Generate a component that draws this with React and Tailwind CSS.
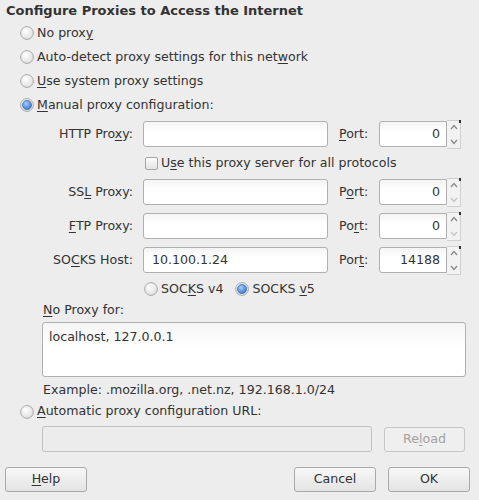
import { useState } from 'react';

function Radio({ checked }) {
  return (
    <svg width="14" height="14" viewBox="0 0 14 14" className="shrink-0">
      <defs>
        <radialGradient id="rOff" cx="0.4" cy="0.35" r="0.7">
          <stop offset="0" stopColor="#ffffff" />
          <stop offset="1" stopColor="#dcdcdc" />
        </radialGradient>
        <radialGradient id="rOn" cx="0.4" cy="0.35" r="0.7">
          <stop offset="0" stopColor="#a9cdf5" />
          <stop offset="1" stopColor="#2f74d0" />
        </radialGradient>
      </defs>
      <circle cx="7" cy="7" r="6.4" fill="url(#rOff)" stroke="#a3a3a3" strokeWidth="0.9" />
      {checked && <circle cx="7" cy="7" r="4.6" fill="url(#rOn)" stroke="#3a6cb0" strokeWidth="0.7" />}
    </svg>
  );
}

function Check() {
  return (
    <span className="block h-[13px] w-[13px] shrink-0 rounded-[2px] border border-[#a6a6a6] bg-gradient-to-b from-[#fdfdfd] to-[#e2e2e2]" />
  );
}

function Field({ value = '', className = '' }) {
  return (
    <div className={`flex h-[26px] items-center rounded-[3px] border border-[#b0b0b0] bg-gradient-to-b from-[#f4f4f4] to-white to-40% px-[8px] ${className}`}>
      {value}
    </div>
  );
}

function Spin({ value, disabledDown }) {
  return (
    <div className="flex h-[29px] items-center">
      <div className="flex h-[26px] w-[68px] items-center justify-end rounded-l-[3px] border border-[#b0b0b0] bg-gradient-to-b from-[#f4f4f4] to-white to-40% pr-[6px]">
        {value}
      </div>
      <div className="relative flex h-[29px] w-[14px] flex-col items-center justify-between border border-l-0 border-[#d0d0d0] bg-[#f2f2f2] py-[3px]">
        <span className="absolute right-[-1px] top-[-1px] h-[3px] w-[2px] bg-[#333]" />
        <svg width="8" height="6" viewBox="0 0 8 6">
          <path d="M1 5 L4 1.5 L7 5" fill="none" stroke="#8a8a8a" strokeWidth="1.3" />
        </svg>
        <svg width="8" height="6" viewBox="0 0 8 6">
          <path d="M1 1 L4 4.5 L7 1" fill="none" stroke={disabledDown ? '#c4c4c4' : '#8a8a8a'} strokeWidth="1.3" />
        </svg>
      </div>
    </div>
  );
}

function ProxyRow({ label, portLabel, host, port, disabledDown }) {
  return (
    <div className="flex h-[34px] items-center">
      <div className="w-[133px] whitespace-nowrap text-right">{label}</div>
      <Field value={host} className="ml-[10px] w-[185px]" />
      <div className="ml-[11px] w-[40px]">{portLabel}</div>
      <Spin value={port} disabledDown={disabledDown} />
    </div>
  );
}

function Btn({ children, className = '' }) {
  return (
    <button type="button" className={`flex h-[25px] w-[82px] items-center justify-center rounded-[3px] border border-[#a9a9a9] bg-gradient-to-b from-[#f7f7f7] to-[#e4e4e4] ${className}`}>
      {children}
    </button>
  );
}

export default function App() {
  const [mode] = useState('manual');

  const radios = [
    { id: 'none', label: <>No prox<u>y</u></> },
    { id: 'auto', label: <>Auto-detect proxy settings for this net<u>w</u>ork</> },
    { id: 'system', label: <><u>U</u>se system proxy settings</> },
    { id: 'manual', label: <><u>M</u>anual proxy configuration:</> },
  ];

  return (
    <div className="h-[500px] w-[479px] overflow-hidden bg-[#ededed] text-[12.6px] text-[#333] [font-family:'DejaVu_Sans',sans-serif] [&_u]:underline-offset-[1.5px]">
      <div className="flex h-[21px] items-center pl-[6px] pt-[1px] text-[13px] font-bold">
        Configure Proxies to Access the Internet
      </div>

      {radios.map((r) => (
        <div key={r.id} className="flex h-[24px] items-center gap-[3px] pl-[20px]">
          <Radio checked={mode === r.id} />
          <span>{r.label}</span>
        </div>
      ))}

      <ProxyRow label={<>HTTP Pro<u>x</u>y:</>} portLabel={<><u>P</u>ort:</>} port="0" />

      <div className="flex h-[24px] items-center gap-[3px] pl-[145px]">
        <Check />
        <span>U<u>s</u>e this proxy server for all protocols</span>
      </div>

      <ProxyRow label={<>SS<u>L</u> Proxy:</>} portLabel={<>P<u>o</u>rt:</>} port="0" disabledDown />
      <ProxyRow label={<><u>F</u>TP Proxy:</>} portLabel={<>Po<u>r</u>t:</>} port="0" disabledDown />
      <ProxyRow label={<>SO<u>C</u>KS Host:</>} host="10.100.1.24" portLabel={<>Por<u>t</u>:</>} port="14188" />

      <div className="flex h-[24px] items-center pl-[144px]">
        <Radio />
        <span className="ml-[3px]">SOC<u>K</u>S v4</span>
        <span className="ml-[12px]"><Radio checked /></span>
        <span className="ml-[3px]">SOCKS <u>v</u>5</span>
      </div>

      <div className="flex h-[19px] items-center pl-[43px]">
        <span><u>N</u>o Proxy for:</span>
      </div>
      <div className="ml-[42px] mt-[2px] h-[55px] w-[424px] rounded-[3px] border border-[#b0b0b0] bg-gradient-to-b from-[#f6f6f6] to-white to-50% px-[6px] pt-[5px]">
        localhost, 127.0.0.1
      </div>

      <div className="flex h-[24px] items-center pl-[43px] pt-[2px]">
        Example: .mozilla.org, .net.nz, 192.168.1.0/24
      </div>

      <div className="flex h-[21px] items-center gap-[3px] pl-[20px]">
        <Radio />
        <span><u>A</u>utomatic proxy configuration URL:</span>
      </div>

      <div className="mt-[4px] flex items-center pl-[42px]">
        <div className="h-[26px] w-[330px] rounded-[3px] border border-[#c2c2c2] bg-[#ececec]" />
        <div className="ml-[12px] flex h-[25px] w-[81px] items-center justify-center rounded-[3px] border border-[#c6c6c6] bg-[#efefef] text-[#a2a2a2]">
          Re<u>l</u>oad
        </div>
      </div>

      <div className="mt-[15px] flex items-center px-[5px]">
        <Btn><span><u>H</u>elp</span></Btn>
        <Btn className="ml-auto">Cancel</Btn>
        <Btn className="ml-[12px] mr-[4px]">OK</Btn>
      </div>
    </div>
  );
}
